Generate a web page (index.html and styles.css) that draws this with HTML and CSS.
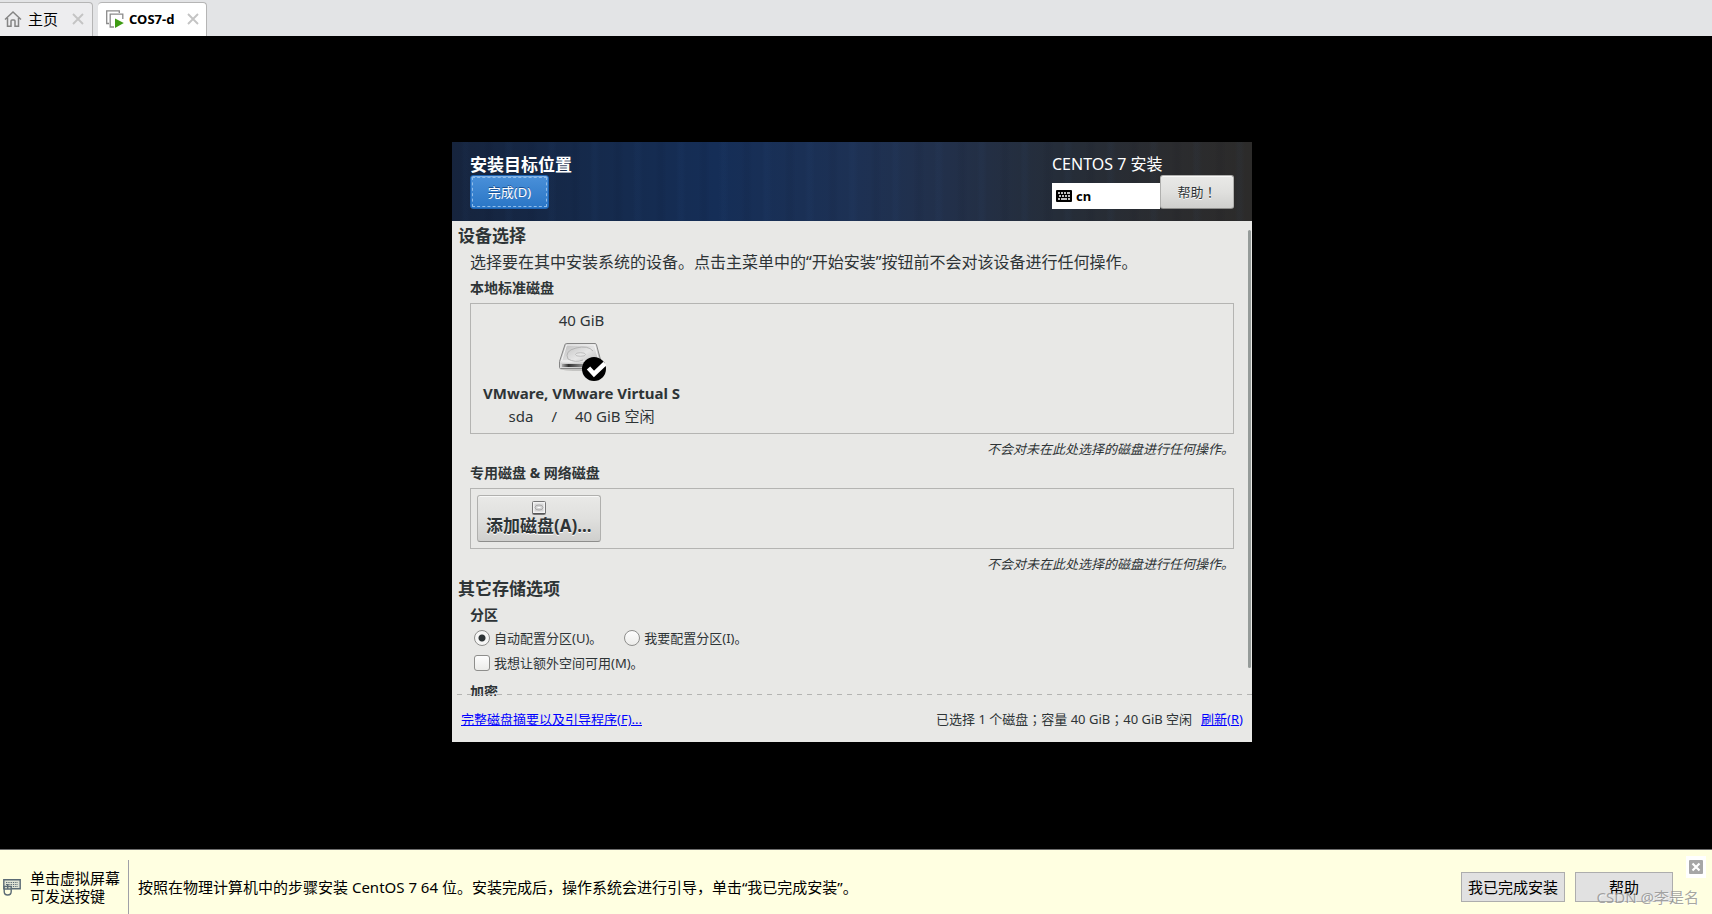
FILE: index.html
```html
<!DOCTYPE html>
<html lang="zh-CN">
<head>
<meta charset="utf-8">
<title>COS7-d</title>
<link rel="stylesheet" href="styles.css">
</head>
<body>
<nav class="tabs">
  <div class="tab">
    <button class="tab-label" type="button">
      <svg width="18" height="18" viewBox="0 0 18 18" fill="none" stroke="#858585" stroke-width="1.5"><path d="M1 9.500 9 2l8 7.500M3.500 8v8.200h3.500v-5.200q0-1 1-1h2q1 0 1 1v5.200h3.500V8"/></svg>
      <span>主页</span>
    </button>
    <button class="tab-close" type="button" aria-label="关闭主页"><svg width="12" height="12" viewBox="0 0 12 12" stroke="#c4c4c4" stroke-width="1.900"><path d="M1 1l10 10M11 1L1 11"/></svg></button>
  </div>
  <div class="tab tab-active">
    <button class="tab-label" type="button">
      <svg width="20" height="18" viewBox="0 0 20 18"><path d="M4 13.500H1.700V.8h12.600V3" fill="none" stroke="#8a8a8a" stroke-width="1.300"/><path d="M9 17H5.200V4.200h12.600V9" fill="none" stroke="#8a8a8a" stroke-width="1.300"/><path d="M10 8.500 18.800 13 10 18z" fill="#3f9c14"/></svg>
      <span>COS7-d</span>
    </button>
    <button class="tab-close" type="button" aria-label="关闭 COS7-d"><svg width="12" height="12" viewBox="0 0 12 12" stroke="#c4c4c4" stroke-width="1.900"><path d="M1 1l10 10M11 1L1 11"/></svg></button>
  </div>
</nav>

<main class="stage">
  <section class="installer">
    <header class="head">
      <div class="head-left">
        <h1>安装目标位置</h1>
        <button class="btn btn-primary" type="button">完成(D)</button>
      </div>
      <div class="head-right">
        <p class="product">CENTOS 7 安装</p>
        <div class="head-tools">
          <button class="layout" type="button">
            <svg width="16" height="12" viewBox="0 0 16 12"><rect width="16" height="12" rx="1"/><path d="M2 3h2M5 3h2M8 3h2M11 3h3M3 6h2M6 6h2M9 6h2M12 6h2M2 9h2M5 9h6M12 9h2" stroke="#fff" stroke-width="1.700"/></svg>
            <span>cn</span>
          </button>
          <button class="btn btn-help" type="button">帮助<span class="mark" lang="ja">！</span></button>
        </div>
      </div>
    </header>

    <div class="content">
      <h2>设备选择</h2>
      <p class="intro">选择要在其中安装系统的设备。点击主菜单中的“开始安装”按钮前不会对该设备进行任何操作。</p>
      <h3>本地标准磁盘</h3>
      <div class="panel panel-local">
        <button class="disk" type="button">
          <span>40 GiB</span>
          <svg width="48" height="40" viewBox="0 0 48 40">
            <defs>
              <linearGradient id="top" x1="0" y1="0" x2="1" y2="1"><stop offset="0" stop-color="#b9b9b9"/><stop offset=".5" stop-color="#e6e6e6"/><stop offset="1" stop-color="#aaaaaa"/></linearGradient>
              <linearGradient id="front" x1="0" y1="0" x2="1" y2="0"><stop offset="0" stop-color="#aaa"/><stop offset=".2" stop-color="#333"/><stop offset=".6" stop-color="#888"/><stop offset="1" stop-color="#aaa"/></linearGradient>
            </defs>
            <ellipse cx="23" cy="28" rx="21" ry="2" fill="#c4c4c2"/>
            <path d="M8.500 2.500h28.500q1 0 1.400 1L43 20.500v6q0 1-1 1H2.500q-1 0-1-1v-6L7 3.500q.4-1 1.500-1z" fill="url(#top)" stroke="#858585"/>
            <path d="M2.500 22h40v4.500h-40z" fill="#d0d0d0"/><path d="M4 23h33v3H4z" fill="url(#front)"/>
            <path d="M8.500 4h28L41 20H3.500z" fill="none" stroke="#f5f5f5"/>
            <path d="M10 18q-4-8 8-11t17 3M10 18q7 4 15 1" fill="none" stroke="#b4b4b4"/>
            <ellipse cx="22.500" cy="13.500" rx="5" ry="1.800" fill="#e6e6e6" stroke="#b4b4b4" stroke-width=".8"/>
            <circle cx="36" cy="28" r="12"/>
            <path d="M30.500 27l5.500 6L47 22.500" fill="none" stroke="#fff" stroke-width="4.600"/>
          </svg>
          <strong>VMware, VMware Virtual S</strong>
          <span class="disk-info"><span>sda</span><span>/</span><span>40 GiB 空闲</span></span>
        </button>
      </div>
      <p class="note">不会对未在此处选择的磁盘进行任何操作。</p>
      <h3>专用磁盘 &amp; 网络磁盘</h3>
      <div class="panel">
        <button class="btn btn-add" type="button">
          <svg width="14" height="14" viewBox="0 0 14 14"><rect x=".5" y=".5" width="13" height="13" rx="1" fill="#f2f2f2" stroke="#777"/><path d="M1 12.500h12" stroke="#555"/><rect x="2.500" y="2.500" width="9" height="8" fill="#d6d6d6"/><ellipse cx="7" cy="6.500" rx="4" ry="2.500" fill="none" stroke="#aaa"/><path d="M5.500 6.500h3" stroke="#fff"/></svg>
          <span>添加磁盘(A)...</span>
        </button>
      </div>
      <p class="note">不会对未在此处选择的磁盘进行任何操作。</p>
      <h2>其它存储选项</h2>
      <h3>分区</h3>
      <div class="options">
        <label><input type="radio" name="part" checked><span>自动配置分区(U)。</span></label>
        <label><input type="radio" name="part"><span>我要配置分区(I)。</span></label>
      </div>
      <div class="options options-extra">
        <label><input type="checkbox"><span>我想让额外空间可用(M)。</span></label>
      </div>
      <h3>加密</h3>
      <span class="scrollbar"></span>
    </div>

    <footer class="foot">
      <a href="#summary">完整磁盘摘要以及引导程序(F)...</a>
      <p class="status">已选择 1 个磁盘<span class="mark" lang="ja">；</span>容量 40 GiB<span class="mark" lang="ja">；</span>40 GiB 空闲</p>
      <a href="#refresh">刷新(R)</a>
    </footer>
  </section>
</main>

<aside class="hint">
  <div class="hint-input">
    <svg width="18" height="18" viewBox="0 0 18 18"><path d="M.8 1.800h16.400v9H.8z" fill="#dfe3d4" stroke="#5b6b75" stroke-width="1.400"/><path d="M3 4.500h12M3 6.500h12M3 8.500h12" stroke="#5b6b75" stroke-width="1.200" stroke-dasharray="1.300 1"/><path d="M1.200 8.500h7v5q0 3.500-3.500 3.500t-3.500-3.500zM4.700 6v5M1.500 11h6.500" fill="#ffffe1" stroke="#5b6b75" stroke-width="1.400"/></svg>
    <p>单击虚拟屏幕<br>可发送按键</p>
  </div>
  <p class="hint-text">按照在物理计算机中的步骤安装 CentOS 7 64 位。安装完成后，操作系统会进行引导，单击“我已完成安装”。</p>
  <button class="sys" type="button">我已完成安装</button>
  <button class="sys" type="button">帮助</button>
  <button class="dismiss" type="button" aria-label="关闭"><svg width="14" height="14" viewBox="0 0 14 14"><rect width="14" height="14" rx="1" fill="#a6a6a6"/><path d="M3.500 3.500l7 7M10.500 3.500l-7 7" stroke="#fff" stroke-width="2.200"/></svg></button>
  <span class="watermark">CSDN @李是名</span>
</aside>
</body>
</html>
```

FILE: styles.css
```css
* {
  box-sizing: border-box;
}

body {
  margin: 0;
  min-height: 100vh;
  display: flex;
  flex-direction: column;
  background: #000;
  color: #2e3436;
  font: 13px/20px "Noto Sans", "Noto Sans CJK SC", sans-serif;
}

h1, h2, h3, p {
  margin: 0;
}

button {
  padding: 0;
  border: 0;
  background: none;
  color: inherit;
  font: inherit;
  white-space: nowrap;
}

svg {
  display: block;
  flex: none;
}

/* Centred full-width punctuation */
.mark {
  font-family: "Noto Sans CJK JP", sans-serif;
}

/* Tab strip */
.tabs {
  display: flex;
  align-items: flex-end;
  gap: 5px;
  height: 36px;
  background: #e3e4e6;
  color: #000;
}

.tab {
  display: flex;
  align-items: center;
  gap: 14px;
  height: 34px;
  padding: 0 8px 2px 4px;
  background: #ededef;
  border: 1px solid #b5b5b5;
  border-width: 1px 1px 0 0;
  border-radius: 0 4px 0 0;
  font-size: 15px;
}

.tab-active {
  gap: 13px;
  padding: 0 7px 2px;
  background: #fff;
  border-radius: 4px 4px 0 0;
  font-size: 13px;
  font-weight: 700;
}

.tab-label {
  display: flex;
  align-items: center;
  gap: 6px;
}

.tab-active .tab-label {
  gap: 4px;
}

/* Guest screen */
.stage {
  flex: 1;
  display: flex;
  flex-direction: column;
  align-items: center;
  justify-content: center;
  padding: 0 8px 2px 0;
}

.installer {
  flex: 0 1 600px;
  display: flex;
  flex-direction: column;
  width: 100%;
  max-width: 800px;
  min-height: 0;
  background: #e8e8e6;
}

.head {
  display: flex;
  justify-content: space-between;
  padding: 12px 18px;
  background:
    repeating-linear-gradient(90deg, transparent 0 9px, rgba(60, 110, 180, 0.04) 12px 15px, transparent 19px 31px, rgba(0, 0, 20, 0.05) 36px 38px, transparent 43px),
    linear-gradient(90deg, #16243d 0%, #152a4c 18%, #152e57 33%, #1d3154 50%, #22304a 62%, #252d39 76%, #2b2c2f 90%, #2c2b2a 100%);
  color: #fff;
}

h1 {
  font-size: 17px;
  line-height: 21px;
}

.product {
  font-size: 16px;
  line-height: 21px;
}

.head-tools {
  display: flex;
  align-items: flex-end;
}

.layout {
  display: flex;
  align-items: center;
  gap: 4px;
  width: 108px;
  height: 26px;
  padding-left: 4px;
  background: #fff;
  color: #000;
  font-size: 13px;
  font-weight: 700;
}

.btn {
  height: 34px;
  padding: 0 16px;
  border: 1px solid #b0b0ae;
  border-bottom-color: #8e8e8c;
  border-radius: 3px;
  background: linear-gradient(#e9e9e7, #e0e0de 50%, #cfcfcd);
  box-shadow: inset 0 1px #f8f8f7;
  color: #2e3436;
  text-shadow: 0 1px #fff;
}

.btn-primary {
  width: 79px;
  border-color: #1c63b4;
  background: linear-gradient(#4a90d9, #2a76c6);
  box-shadow: inset 0 1px #82b3e6;
  outline: 1px dashed #8fbbe9;
  outline-offset: -3px;
  color: #fff;
  text-shadow: 0 -1px #1c5294;
}

.btn-help {
  width: 74px;
}

/* Storage page */
.content {
  position: relative;
  flex: 1;
  min-height: 0;
  overflow: hidden;
  padding: 4px 18px 0;
}

h2 {
  margin-left: -12px;
  font-size: 17px;
  line-height: 22px;
}

.intro {
  margin: 3px 0 4px;
  font-size: 16px;
  line-height: 24px;
}

h3 {
  font-size: 14px;
  line-height: 20px;
}

.panel {
  display: flex;
  margin: 5px 0;
  padding: 6px;
  border: 1px solid #b4b4b2;
}

.panel-local {
  padding-top: 5px;
}

.disk {
  display: flex;
  flex-direction: column;
  align-items: center;
  padding: 0 6px;
  font-size: 15px;
  line-height: 22px;
}

.disk svg {
  margin: 10px 0 1px;
}

.disk-info {
  display: flex;
  gap: 18px;
  margin-top: 1px;
}

.note {
  margin-bottom: 4px;
  text-align: right;
  font-style: italic;
}

.btn-add {
  display: flex;
  flex-direction: column;
  align-items: center;
  height: 47px;
  padding: 5px 8px 0;
  font-size: 17px;
  font-weight: 700;
}

.btn-add span {
  line-height: 22px;
}

h2 + h3 {
  margin-top: 5px;
}

.options {
  display: flex;
  gap: 22px;
  margin-top: 3px;
  padding-left: 4px;
}

.options-extra {
  margin: 5px 0 9px;
}

.options label {
  display: flex;
  align-items: center;
  gap: 4px;
}

.options input {
  appearance: none;
  width: 16px;
  height: 16px;
  margin: 0;
  border: 1px solid #8e8e8c;
  border-radius: 3px;
  background: linear-gradient(#fdfdfd, #ececea);
}

.options input[type="radio"] {
  border-radius: 50%;
}

.options input[type="radio"]:checked {
  background: radial-gradient(circle, #2e3436 0 3px, #f6f6f5 4px);
}

.scrollbar {
  position: absolute;
  top: 9px;
  right: 1px;
  bottom: 28px;
  width: 3px;
  border-radius: 2px;
  background: #959b99;
}

.foot {
  position: relative;
  display: flex;
  align-items: center;
  gap: 9px;
  height: 46px;
  padding: 0 9px;
}

.foot::before {
  content: "";
  position: absolute;
  top: -2px;
  left: 0;
  right: 0;
  height: 1px;
  background: repeating-linear-gradient(90deg, transparent 0 5px, #b4b4b2 5px 10px);
}

.foot a {
  color: #00f;
}

.status {
  margin-left: auto;
}

/* Hint bar */
.hint {
  position: relative;
  display: flex;
  align-items: center;
  height: 65px;
  padding: 10px 6px 0 3px;
  border-top: 1px solid #6d6d6d;
  background: #ffffe1;
  color: #000;
  font-size: 15px;
}

.hint-input {
  display: flex;
  align-items: center;
  align-self: stretch;
  gap: 9px;
  padding-right: 8px;
  border-right: 1px solid #a0a0a8;
  line-height: 18px;
}

.hint-text {
  margin: 0 auto 0 9px;
}

.sys {
  min-width: 98px;
  height: 30px;
  margin-right: 10px;
  padding: 0 6px;
  border: 1px solid #adadad;
  background: #e1e1e1;
}

.dismiss {
  align-self: flex-start;
  display: grid;
  place-items: center;
  width: 20px;
  height: 22px;
  margin: -4px 0 0 3px;
  background: #fff;
}

.watermark {
  position: absolute;
  right: 13px;
  bottom: 7px;
  color: #8f8f8fcc;
  font-size: 15px;
  text-shadow: 1px 1px #ffffff99;
}
```
